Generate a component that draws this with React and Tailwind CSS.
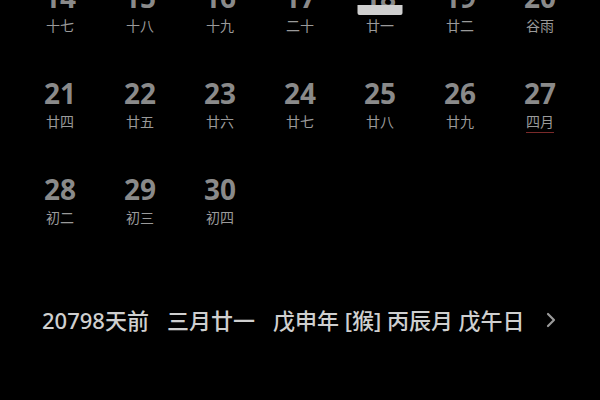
const rows = [
  [
    { d: 14, l: '十七' },
    { d: 15, l: '十八' },
    { d: 16, l: '十九' },
    { d: 17, l: '二十' },
    { d: 18, l: '廿一', selected: true },
    { d: 19, l: '廿二' },
    { d: 20, l: '谷雨' },
  ],
  [
    { d: 21, l: '廿四' },
    { d: 22, l: '廿五' },
    { d: 23, l: '廿六' },
    { d: 24, l: '廿七' },
    { d: 25, l: '廿八' },
    { d: 26, l: '廿九' },
    { d: 27, l: '四月', mark: true },
  ],
  [
    { d: 28, l: '初二' },
    { d: 29, l: '初三' },
    { d: 30, l: '初四' },
  ],
]

function Day({ day }) {
  return (
    <div className="relative flex h-[96px] flex-col items-center">
      <span className="relative text-[28px] font-bold leading-[32px] text-[#8a8a8a]">
        {day.d}
      </span>
      {day.selected ? (
        <span className="absolute left-1/2 top-[24px] h-[10px] w-[45px] -translate-x-1/2 rounded-b-[2px] bg-[#cfcfcf]" />
      ) : null}
      <span
        className={
          'mt-[3px] text-[14px] leading-[20px] text-[#9a9a9a] ' +
          (day.mark ? 'border-b border-[#7a2a2a]' : '')
        }
      >
        {day.l}
      </span>
    </div>
  )
}

export default function App() {
  return (
    <div
      className="h-[400px] w-[600px] overflow-hidden bg-black"
      style={{ fontFamily: '"Noto Sans", "Noto Sans CJK SC", sans-serif' }}
    >
      <div className="-mt-[19px] grid grid-cols-7 px-5">
        {rows.flat().map((day) => (
          <Day key={day.d} day={day} />
        ))}
      </div>

      <div className="mt-[36px] flex items-center pl-[42px] pr-[44px] text-[22px] font-medium leading-[30px] text-[#cfcfcf]">
        <span>20798天前</span>
        <span className="ml-[18px]">三月廿一</span>
        <span className="ml-[18px]">戊申年 [猴] 丙辰月 戊午日</span>
        <svg className="ml-auto" width="10" height="16" viewBox="0 0 10 16" fill="none">
          <path d="M2 2l6 6-6 6" stroke="#9a9a9a" strokeWidth="2.2" strokeLinecap="round" strokeLinejoin="round" />
        </svg>
      </div>
    </div>
  )
}
